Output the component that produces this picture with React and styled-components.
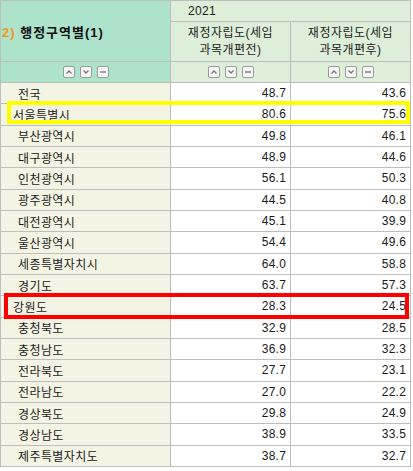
import React from 'react'
import styled, { createGlobalStyle } from 'styled-components'

const GlobalStyle = createGlobalStyle`
	html, body {
		margin: 0;
		padding: 0;
		background: #fff;
	}
	body {
		font-family: 'Liberation Sans', 'Noto Sans CJK KR', sans-serif;
		font-size: 12px;
		color: #1a1a1a;
	}
`

const Wrapper = styled.div`
	position: relative;
	width: 413px;
	height: 471px;
	overflow: hidden;
`

const Table = styled.table`
	border-collapse: collapse;
	table-layout: fixed;
	width: 410px;
	margin: 0;
	& td,
	& th {
		border: 1px solid #bdbdbd;
		padding: 0;
		font-weight: normal;
	}
`

const TitleCell = styled.th`
	background: #ade3cb;
	text-align: left;
	vertical-align: middle;
	padding-left: 1px !important;
	font-size: 13px;
	font-weight: bold !important;
	letter-spacing: 1px;
	color: #111;
`

const Num = styled.span`
	color: #f0961e;
`

const YearCell = styled.th`
	background: #ddefd8;
	text-align: left;
	padding-left: 17px !important;
	height: 20px;
	letter-spacing: 0.3px;
`

const LabelCell = styled.th`
	background: #ddefd8;
	text-align: center;
	vertical-align: middle;
	line-height: 17px;
	height: 39px;
	letter-spacing: 0.5px;
	color: #222;
`

const ToolCell = styled.th`
	background: ${p => (p.$title ? '#ade3cb' : '#ddefd8')};
	height: 20px;
`

const Tools = styled.div`
	display: flex;
	justify-content: center;
	align-items: center;
	gap: 5px;
`

const ToolButton = styled.span`
	display: flex;
	align-items: center;
	justify-content: center;
	width: 10px;
	height: 10px;
	border: 1px solid #9a9a9a;
	border-radius: 2px;
	background: #f7f7f7;
`

const Row = styled.tr`
	height: 21.33px;
`

const NameCell = styled.td`
	background: #f4f4e4;
	padding-left: ${p => (p.$shift ? '12px' : '17px')} !important;
	letter-spacing: 0.4px;
	white-space: nowrap;
`

const ValueCell = styled.td`
	background: #fff;
	text-align: right;
	padding-right: 4px !important;
	letter-spacing: 0.2px;
`

const Highlight = styled.div`
	position: absolute;
	box-sizing: border-box;
	border: ${p => p.$w}px solid ${p => p.$color};
	pointer-events: none;
`

const Icon = ({ kind }) => (
	<svg width="8" height="8" viewBox="0 0 8 8">
		{kind === 'up' && (
			<polyline points="1.5,5.5 4,3 6.5,5.5" fill="none" stroke="#777" strokeWidth="1.4" />
		)}
		{kind === 'down' && (
			<polyline points="1.5,2.5 4,5 6.5,2.5" fill="none" stroke="#777" strokeWidth="1.4" />
		)}
		{kind === 'minus' && <line x1="1" y1="4" x2="7" y2="4" stroke="#777" strokeWidth="1.4" />}
	</svg>
)

const ToolSet = () => (
	<Tools>
		<ToolButton>
			<Icon kind="up" />
		</ToolButton>
		<ToolButton>
			<Icon kind="down" />
		</ToolButton>
		<ToolButton>
			<Icon kind="minus" />
		</ToolButton>
	</Tools>
)

const rows = [
	['전국', '48.7', '43.6'],
	['서울특별시', '80.6', '75.6', true],
	['부산광역시', '49.8', '46.1'],
	['대구광역시', '48.9', '44.6'],
	['인천광역시', '56.1', '50.3'],
	['광주광역시', '44.5', '40.8'],
	['대전광역시', '45.1', '39.9'],
	['울산광역시', '54.4', '49.6'],
	['세종특별자치시', '64.0', '58.8'],
	['경기도', '63.7', '57.3'],
	['강원도', '28.3', '24.5', true],
	['충청북도', '32.9', '28.5'],
	['충청남도', '36.9', '32.3'],
	['전라북도', '27.7', '23.1'],
	['전라남도', '27.0', '22.2'],
	['경상북도', '29.8', '24.9'],
	['경상남도', '38.9', '33.5'],
	['제주특별자치도', '38.7', '32.7']
]

const App = () => {
	return (
		<Wrapper>
			<GlobalStyle />
			<Table>
				<colgroup>
					<col style={{ width: 170 }} />
					<col style={{ width: 120 }} />
					<col style={{ width: 120 }} />
				</colgroup>
				<thead>
					<tr>
						<TitleCell rowSpan={2}>
							<Num>2)</Num> 행정구역별(1)
						</TitleCell>
						<YearCell colSpan={2}>2021</YearCell>
					</tr>
					<tr>
						<LabelCell>
							재정자립도(세입
							<br />
							과목개편전)
						</LabelCell>
						<LabelCell>
							재정자립도(세입
							<br />
							과목개편후)
						</LabelCell>
					</tr>
					<tr>
						<ToolCell $title>
							<ToolSet />
						</ToolCell>
						<ToolCell>
							<ToolSet />
						</ToolCell>
						<ToolCell>
							<ToolSet />
						</ToolCell>
					</tr>
				</thead>
				<tbody>
					{rows.map(([name, before, after, shift]) => (
						<Row key={name}>
							<NameCell $shift={shift}>{name}</NameCell>
							<ValueCell>{before}</ValueCell>
							<ValueCell>{after}</ValueCell>
						</Row>
					))}
				</tbody>
			</Table>
			<Highlight $color="#ffff00" $w={4} style={{ left: 7, top: 101, width: 403, height: 23 }} />
			<Highlight $color="#ff0000" $w={4} style={{ left: 4, top: 293, width: 405, height: 26 }} />
		</Wrapper>
	)
}

export default App
